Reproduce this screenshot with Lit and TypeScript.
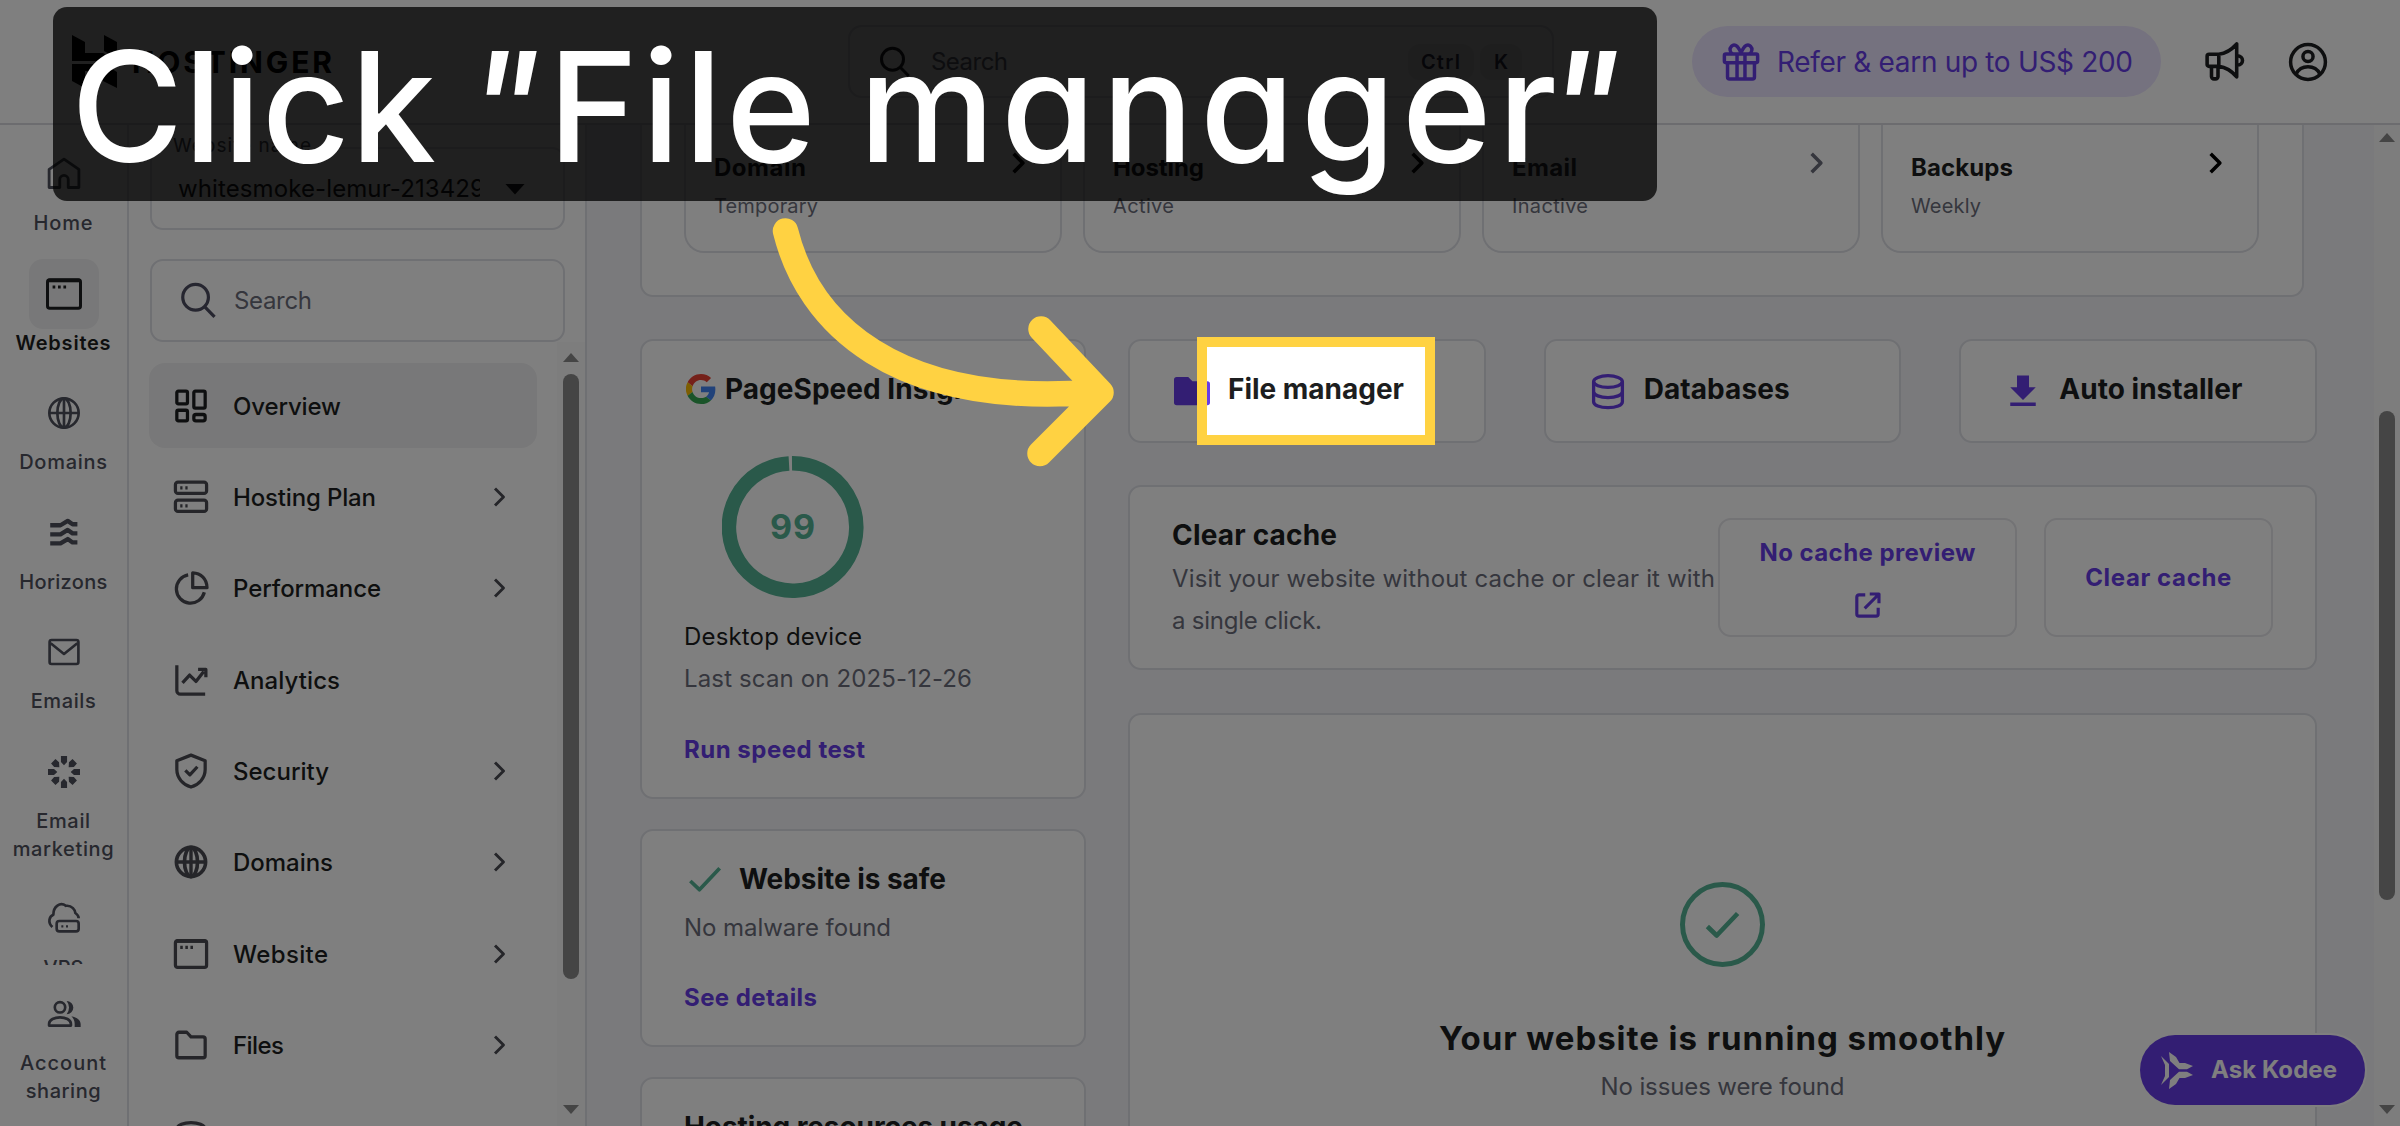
import { LitElement, html, css, svg } from 'lit';
import { customElement } from 'lit/decorators.js';
import { classMap } from 'lit/directives/class-map.js';

// one line of text, tracked in or out so it fills exactly w pixels
@customElement('fit-text')
export class FitText extends LitElement {
    static properties = { w: { type: Number } };
    declare w: number;

    static styles = css`
        :host { display: inline-block; white-space: pre; }
    `;

    firstUpdated() {
        const len = (this.textContent || '').length;
        const natural = this.getBoundingClientRect().width;
        if (this.w && len > 1) this.style.letterSpacing = `${(this.w - natural) / (len - 1)}px`;
    }

    render() {
        return html`<slot></slot>`;
    }
}

// all icons are on a 24 grid, stroked unless they carry the "solid" class
const icons: Record<string, unknown> = {
    home: svg`<path d="M1.500 21.500V8.700L12 1.500L22.500 8.700V21.500H15V16a3 3 0 0 0-6 0V21.500Z"/>`,
    window: svg`<rect x="1" y="2.500" width="22" height="19" rx="1.500"/><path d="M1.500 3H22.500" stroke-width="2.400"/><path d="M4.400 7.300h1.800M8 7.300h1.800M11.600 7.300h1.800"/>`,
    globe: svg`<circle cx="12" cy="12" r="11"/><ellipse cx="12" cy="12" rx="5" ry="11"/><path d="M1 12H23M12 1V23"/>`,
    globeBold: svg`<circle cx="12" cy="12" r="10.300" stroke-width="2.600"/><ellipse cx="12" cy="12" rx="4.600" ry="10.300" stroke-width="2.600"/><path d="M2 12H22M12 2V22" stroke-width="2.400"/>`,
    horizons: svg`<path stroke-width="3.600" d="M1 6h8.500L15.500 2.400l4 2.800h4M1 13.500h8.500L15.500 9.900l4 2.800h4M1 21h8.500l6-3.600 4 2.800h4"/>`,
    mail: svg`<rect x="1.200" y="3" width="21.600" height="18" rx="1.500"/><path d="M2 5.500L12 13.500L22 5.500"/>`,
    burst: svg`<path class="solid" d="M9.700 0H14.300V4.500L12 7L9.700 4.500ZM9.700 24H14.300V19.500L12 17L9.700 19.500ZM0 9.700V14.300H4.500L7 12L4.500 9.700ZM24 9.700V14.300H19.500L17 12L19.500 9.700ZM2.300 5.600L5.600 2.300L8.300 4.600L8.500 8.500L4.600 8.300ZM21.700 5.600L18.400 2.300L15.700 4.600L15.500 8.500L19.400 8.300ZM2.300 18.400L5.600 21.700L8.300 19.400L8.500 15.500L4.600 15.700ZM21.700 18.400L18.400 21.700L15.700 19.400L15.500 15.500L19.400 15.700Z"/>`,
    vps: svg`<path d="M3.300 18C-.5 14.500 1 10 4 8.800C4 2.500 9 -1 13.500 2.100C18 1.500 20.500 5.500 20.500 7.500C22 8.500 23 10.500 23 11.500"/><rect x="6.500" y="13.500" width="16.500" height="7.800" rx="2"/><path d="M10 17.500h1.500M13.500 17.500H15" stroke-width="1.600"/>`,
    people: svg`<circle cx="9" cy="7" r="3.900"/><path d="M.8 20.700v-1.200C.8 16.200 5 14.500 9 14.500s8.200 1.700 8.200 5v1.200Z"/><path class="solid" d="M14 2.200a5 5 0 0 1 0 10a8 8 0 0 0 0-10ZM17.500 13.700c4.500 .8 7 3 7 6v2h-4.500v-2.500c0-2.200-1-4-2.500-5.500Z"/>`,
    search: svg`<circle cx="10" cy="9.800" r="8.800"/><path d="M16 16L23 23.200"/>`,
    grid: svg`<rect x="2" y="1.500" width="7.500" height="9" rx="1"/><rect x="14" y="1.500" width="8" height="12" rx="1"/><rect x="2" y="15" width="7.500" height="7.500" rx="1"/><rect x="14" y="18" width="8" height="4.500" rx="1.500"/>`,
    server: svg`<rect x="1" y="1.500" width="22" height="8" rx="1.800"/><rect x="1" y="14.200" width="22" height="8" rx="1.800"/><path d="M4.400 5.500H6M8 5.500h1.600M4.400 18.200H6M8 18.200h1.600"/>`,
    pie: svg`<path d="M10 2.800A10 10 0 1 0 21.400 15M13.200 1.300V11.800H23.300C23.300 5.500 19 1.500 13.200 1.300Z"/>`,
    chart: svg`<path d="M2 1.500V19.500a2.500 2.500 0 0 0 2.500 2.500H22M6 14l5-5.500 4.500 4.500L21 6M17 4.500h5.500V10"/>`,
    shield: svg`<path d="M12 .8L22 4.800V11c0 6-4.500 10.800-10 12.300C6.500 21.800 2 17 2 11V4.800Z"/><path d="M8 11.500l3.200 3.200L16.500 9"/>`,
    folder: svg`<path d="M2 4.500A1.500 1.500 0 0 1 3.500 3H9l3 3.200h8.500A1.500 1.500 0 0 1 22 7.700V19.500a1.500 1.500 0 0 1-1.500 1.500H3.500A1.500 1.500 0 0 1 2 19.500Z"/>`,
    folderFill: svg`<path class="solid" d="M0 4.500a1.800 1.800 0 0 1 1.800-1.800H9.500l2.800 2.800H22.200A1.800 1.800 0 0 1 24 7.300v12.400a1.800 1.800 0 0 1-1.800 1.800H1.800A1.800 1.800 0 0 1 0 19.700Z"/>`,
    database: svg`<ellipse cx="12" cy="5.700" rx="9.600" ry="3.900"/><path d="M2.400 5.700V19.100c0 2.300 4.200 4 9.600 4s9.600-1.700 9.600-4V5.700M2.400 12.400c0 2.300 4.200 4 9.600 4s9.600-1.700 9.600-4"/>`,
    download: svg`<path class="solid" d="M8 1.700h8V9.500h4.500L12 18 3.500 9.500H8ZM3.500 19.600H20.500V22H3.500Z"/>`,
    gift: svg`<rect x="1.500" y="7" width="21" height="5.400" rx="1"/><path d="M3.500 12.400V21.500a1.300 1.300 0 0 0 1.300 1.300H19.200a1.300 1.300 0 0 0 1.300-1.300V12.400M9.500 7V22.500M14.500 7V22.500M12 6.500C10 1 7.500 .5 6 2C4.500 3.500 5 5.500 6.500 7M12 6.500C14 1 16.500 .5 18 2C19.500 3.500 19 5.500 17.500 7"/>`,
    megaphone: svg`<path d="M8.500 7.500H2.500a1.200 1.200 0 0 0-1.200 1.200v5.100A1.200 1.200 0 0 0 2.500 15H8.500ZM8.500 7.500C13 7 17 4 19.500 1.200V21.500C17 18.500 13 15.500 8.500 15M4 15.200v6a1.500 1.500 0 0 0 1.500 1.500h1A1.500 1.500 0 0 0 8 21.200V15.200M19.700 8.500c4.500 0 4.500 5.700 0 5.700"/>`,
    user: svg`<circle cx="12" cy="12" r="11"/><circle cx="12" cy="8.500" r="3.200"/><path d="M4.500 19.500C6 16.500 9 15 12 15s6 1.500 7.500 4.500"/>`,
    chevron: svg`<path d="M8 3.500L16.500 12L8 20.500"/>`,
    check: svg`<path d="M1 13.500L7.800 20L23 4"/>`,
    external: svg`<path d="M10 2.500H4.500a2 2 0 0 0-2 2V19.500a2 2 0 0 0 2 2H19.500a2 2 0 0 0 2-2V14M14 1.800h8.200V10M22 2L9.500 14.500"/>`,
};

const icon = (name: string, size: number, stroke = 2) => html`
    <svg class="icon" viewBox="0 0 24 24" width=${size} height=${size} stroke-width=${stroke}>${icons[name]}</svg>`;

const t = (text: string, w: number) => html`<fit-text w=${w}>${text}</fit-text>`;

@customElement('app-root')
export class AppRoot extends LitElement {

    rail = [
        { icon: 'home', size: 34, lines: [['Home', 59]] },
        { icon: 'window', size: 36, lines: [['Websites', 95]], active: true },
        { icon: 'globe', size: 32, lines: [['Domains', 88]] },
        { icon: 'horizons', size: 29, lines: [['Horizons', 88]] },
        { icon: 'mail', size: 32, lines: [['Emails', 65]] },
        { icon: 'burst', size: 32, lines: [['Email', 54], ['marketing', 101]] },
        { icon: 'vps', size: 32, lines: [['VPS', 40]] },
    ];

    menu = [
        { icon: 'grid', name: 'Overview', w: 108, active: true },
        { icon: 'server', name: 'Hosting Plan', w: 143, more: true },
        { icon: 'pie', name: 'Performance', w: 148, more: true },
        { icon: 'chart', name: 'Analytics', w: 107 },
        { icon: 'shield', name: 'Security', w: 96, more: true },
        { icon: 'globeBold', name: 'Domains', w: 100, more: true },
        { icon: 'window', name: 'Website', w: 95, more: true },
        { icon: 'folder', name: 'Files', w: 51, more: true },
        { icon: 'database', name: 'Databases', w: 120, more: true },
    ];

    status = [
        { name: 'Domain', w: 92, value: 'Temporary', vw: 104 },
        { name: 'Hosting', w: 91, value: 'Active', vw: 61 },
        { name: 'Email', w: 65, value: 'Inactive', vw: 76, off: true },
        { name: 'Backups', w: 102, value: 'Weekly', vw: 70 },
    ];

    tools = [
        { icon: 'folderFill', size: 36, name: 'File manager', w: 176 },
        { icon: 'database', size: 36, name: 'Databases', w: 146 },
        { icon: 'download', size: 36, name: 'Auto installer', w: 183 },
    ];

    static styles = css`
        :host {
            display: block;
            position: relative;
            width: 2400px;
            height: 1126px;
            overflow: hidden;
            background: #ffffff;
            color: #1d1e20;
            font-family: 'Inter', 'Liberation Sans', sans-serif;
            font-size: 24px;
            line-height: 42px;
            --gray: #6b6d7a;
            --line: #dfe0e6;
            --purple: #673de6;
            --green: #54b394;
            --yellow: #ffd242;
        }
        * { box-sizing: border-box; }
        .icon { display: block; flex: none; fill: none; stroke: currentColor; stroke-linejoin: round; overflow: visible; }
        .solid { fill: currentColor; stroke: none; }

        /* header */
        .header { display: flex; align-items: center; height: 125px; padding-right: 72px; border-bottom: 2px solid #d8d9df; }
        .logo { display: flex; align-items: center; gap: 15px; width: 848px; padding-left: 72px; font-size: 30px; font-weight: 700; color: #000; }
        .logo svg { display: block; fill: #000; }
        .top-search { display: flex; align-items: center; width: 706px; height: 73px; padding: 0 30px; border: 2px solid var(--line); border-radius: 14px; color: var(--gray); }
        .top-search .icon { color: #1d1e20; margin-right: 21px; }
        .keys { display: flex; gap: 6px; margin-left: auto; }
        .key { display: flex; align-items: center; justify-content: center; height: 36px; width: 66px; border-radius: 12px; background: #f2f2f3; color: #36344d; font-size: 20px; font-weight: 600; }
        .key.small { width: 42px; }
        .refer { display: flex; align-items: center; gap: 17px; width: 469px; height: 71px; margin-left: 138px; padding-left: 30px; border-radius: 36px; background: #ebe4ff; color: var(--purple); font-size: 28px; }
        .megaphone { margin-left: 44px; }
        .account { margin-left: 45px; }

        .body { display: flex; height: 1001px; }

        /* left rail */
        .rail { width: 129px; border-right: 2px solid var(--line); font-size: 20px; font-weight: 500; line-height: 28px; color: #4e505c; }
        .rail-list { height: 840px; padding-top: 14px; overflow: hidden; }
        .rail-item { display: flex; flex-direction: column; align-items: center; margin-bottom: 21.500px; }
        .rail-icon { display: flex; align-items: center; justify-content: center; width: 70px; height: 70px; border-radius: 14px; }
        .rail-item.active { color: #1d1e20; font-weight: 600; }
        .rail-item.active .rail-icon { background: #f1f1f2; }
        .rail-bottom { padding-top: 13.500px; }

        /* sidebar */
        .side { width: 458px; border-right: 2px solid var(--line); }
        .select { position: relative; display: flex; align-items: center; width: 415px; height: 83px; margin: 22px 0 0 21px; padding: 1px 38px 0 26px; border: 2px solid var(--line); border-radius: 13px; }
        .select-label { position: absolute; top: -20px; left: 13px; padding: 0 8px; background: #fff; font-size: 19px; line-height: 34px; color: #4e505c; }
        .select-value { width: 302px; overflow: hidden; }
        .caret { width: 20px; height: 11px; margin-left: auto; background: #1d1e20; clip-path: polygon(0 0, 100% 0, 50% 100%); }
        .side-search { display: flex; align-items: center; gap: 18px; width: 415px; height: 83px; margin: 29px 0 0 21px; padding-left: 29px; border: 2px solid var(--line); border-radius: 13px; color: var(--gray); }
        .side-search .icon { color: #4d4c60; }
        .side-scroll { display: flex; height: 784px; overflow: hidden; }
        .menu { width: 388px; margin: 21px 0 0 20px; }
        .menu-item { display: flex; align-items: center; height: 85px; margin-bottom: 6.400px; padding: 0 26px 0 25px; border-radius: 16px; font-weight: 500; }
        .menu-item > .icon { color: #4a4b52; }
        .menu-item fit-text { margin-left: 25px; padding-top: 2px; }
        .menu-item.active { background: #f1f1f2; }
        .menu-item.active > .icon { color: #1d1e20; }
        .chevron { margin-left: auto; color: #4a4b52; }

        /* scroll bars */
        .bar { display: flex; flex-direction: column; align-items: center; background: #fbfbfb; }
        .bar-side { width: 28px; margin-left: 20.500px; padding: 11px 0 12px; }
        .bar-page { width: 26px; padding: 8px 0 12px; }
        .up, .down { flex: none; width: 16px; height: 9px; background: #8a8a8a; clip-path: polygon(50% 0, 100% 100%, 0 100%); }
        .down { clip-path: polygon(0 0, 100% 0, 50% 100%); margin-top: auto; }
        .thumb { flex: none; width: 16px; border-radius: 8px; background: #8a8a8a; }
        .bar-side .thumb { height: 605px; margin-top: 12px; }
        .bar-page .thumb { height: 489px; margin-top: 269px; }

        /* main */
        .main { flex: 1; padding-left: 53px; overflow: hidden; background: #f4f5f9; }
        .card { background: #fff; border: 2px solid var(--line); border-radius: 13px; }
        .overview { display: grid; grid-template-columns: repeat(4, 378px); gap: 21px; width: 1664px; height: 172px; padding: 0 42px 42px; border-top: 0; border-radius: 0 0 13px 13px; }
        .status { display: flex; justify-content: space-between; padding: 24.500px 29px 0 28px; border: 2px solid var(--line); border-top: 0; border-radius: 0 0 20px 20px; }
        .status-name { display: block; line-height: 36px; font-weight: 700; }
        .status-value { display: block; margin-top: 6px; font-size: 20px; line-height: 28px; color: var(--gray); }
        .status .icon { color: #000; }
        .status.off .status-name { color: #36373f; }
        .status.off .icon { color: var(--gray); }

        .columns { display: flex; gap: 42px; margin-top: 42px; }
        .left { display: flex; flex-direction: column; gap: 30px; width: 446px; }
        .left .card { padding: 29px 42px 0; }
        .title { display: flex; align-items: center; font-size: 28px; line-height: 38px; font-weight: 700; }
        .speed { height: 460px; }
        .speed .title { gap: 9px; padding-left: 2px; }
        .ring { display: flex; align-items: center; justify-content: center; position: relative; width: 142px; height: 142px; margin: 48px 0 18px 38px; color: #54b394; font-size: 34px; font-weight: 700; }
        .ring svg { position: absolute; inset: 0; }
        .muted { color: var(--gray); }
        .line { height: 42px; }
        .link { height: 42px; margin-top: 28.500px; color: var(--purple); font-weight: 700; }
        .safe { height: 218px; }
        .safe .title { gap: 18px; padding-left: 5px; margin-bottom: 8.500px; }
        .safe .icon { color: var(--green); }
        .usage { height: 140px; }

        .right { width: 1189px; }
        .tools { display: grid; grid-template-columns: repeat(3, 1fr); gap: 58px; }
        .tool { display: flex; align-items: center; gap: 18px; height: 104px; padding-left: 44px; }
        .tool .icon { color: var(--purple); }
        .tool .title { padding-bottom: 5px; }
        .cache { display: flex; align-items: center; height: 185px; margin-top: 42px; padding: 0 42px; }
        .cache-text { width: 546.500px; height: 124px; }
        .cache-text .title { margin-bottom: 4px; }
        .button { display: flex; flex-direction: column; align-items: center; height: 119px; border: 2px solid #e6e6ea; border-radius: 13px; color: var(--purple); font-weight: 700; }
        .preview { width: 299px; margin-right: 27px; padding-top: 12px; }
        .preview .icon { margin-top: 18px; }
        .clear { width: 229px; padding-top: 37px; }
        .health { display: flex; flex-direction: column; align-items: center; height: 500px; margin-top: 42.500px; padding-top: 167.500px; }
        .health-icon { display: flex; align-items: center; justify-content: center; width: 85px; height: 85px; border: 5px solid var(--green); border-radius: 50%; color: var(--green); }
        .health-title { height: 48px; margin: 46.500px 0 4px; font-size: 33px; line-height: 48px; font-weight: 700; }

        /* floating parts */
        .kodee { position: absolute; left: 2140px; top: 1035px; display: flex; align-items: center; gap: 18px; width: 225px; height: 70px; padding-left: 21px; border-radius: 35px; background: var(--purple); box-shadow: 0 0 0 2px #fff; color: #fff; font-weight: 700; }
        .kodee svg { display: block; fill: #fff; }
        .spotlight { position: absolute; left: 1197px; top: 337px; width: 238px; height: 108px; border: 10.500px solid var(--yellow); box-shadow: 0 0 0 2400px rgba(0, 0, 0, 0.5); }
        .arrow { position: absolute; left: 0; top: 0; fill: none; stroke: var(--yellow); stroke-width: 25.500; stroke-linecap: round; stroke-linejoin: round; }
        .caption { position: absolute; left: 53px; top: 7px; display: flex; width: 1604px; height: 194px; padding: 3px 0 0 18px; border-radius: 14px; background: rgba(0, 0, 0, 0.75); color: #fff; font-size: 153px; line-height: 194px; font-weight: 540; font-feature-settings: 'cv11'; }
        .word { width: 394px; }
        .quote { width: 83px; font-style: italic; }
        .word.file { width: 311px; }
        .word.last { width: 686px; }
    `;

    renderHeader() {
        return html`
            <div class="header">
                <div class="logo">
                    <svg width="45" height="53" viewBox="0 0 45 53">
                        <path d="M0 0L13 7V18H31L45 26H0ZM32 0L45 7V23L32 16ZM0 29H32L45 37V53L31 46V36H13V45L0 37ZM0 37L13 45V53L0 46Z"/>
                    </svg>
                    ${t('HOSTINGER', 200)}
                </div>
                <div class="top-search">
                    ${icon('search', 30, 2.4)}
                    ${t('Search', 77)}
                    <div class="keys">
                        <div class="key">${t('Ctrl', 39)}</div>
                        <div class="key small">K</div>
                    </div>
                </div>
                <div class="refer">
                    ${icon('gift', 38, 2.2)}
                    ${t('Refer & earn up to US$ 200', 356)}
                </div>
                <div class="megaphone">${icon('megaphone', 39, 2.2)}</div>
                <div class="account">${icon('user', 38, 2.2)}</div>
            </div>`;
    }

    renderRailItem(item: any) {
        return html`
            <div class=${classMap({ 'rail-item': true, active: !!item.active })}>
                <div class="rail-icon">${icon(item.icon, item.size, 2)}</div>
                ${item.lines.map(([text, w]: [string, number]) => t(text, w))}
            </div>`;
    }

    renderSide() {
        return html`
            <div class="side">
                <div class="select">
                    <div class="select-label">${t('Website name', 138)}</div>
                    <div class="select-value">${t('whitesmoke-lemur-213429', 307)}</div>
                    <div class="caret"></div>
                </div>
                <div class="side-search">
                    ${icon('search', 35, 2.2)}
                    ${t('Search', 78)}
                </div>
                <div class="side-scroll">
                    <div class="menu">
                        ${this.menu.map(item => html`
                            <div class=${classMap({ 'menu-item': true, active: !!item.active })}>
                                ${icon(item.icon, 34, 2.3)}
                                ${t(item.name, item.w)}
                                ${item.more ? html`<div class="chevron">${icon('chevron', 24, 2.9)}</div>` : ''}
                            </div>
                        `)}
                    </div>
                    <div class="bar bar-side">
                        <div class="up"></div>
                        <div class="thumb"></div>
                        <div class="down"></div>
                    </div>
                </div>
            </div>`;
    }

    renderLeft() {
        return html`
            <div class="left">
                <div class="card speed">
                    <div class="title">
                        <svg width="30" height="30" viewBox="0 0 48 48">
                            <path fill="#EA4335" d="M24 9.500c3.500 0 6.700 1.200 9.200 3.600l6.900-6.900C35.900 2.400 30.500 0 24 0 14.600 0 6.500 5.400 2.600 13.200l8 6.200C12.400 13.700 17.700 9.500 24 9.500z"/>
                            <path fill="#4285F4" d="M47 24.600c0-1.600-.2-3.100-.4-4.600H24v9h12.900c-.6 3-2.300 5.500-4.800 7.200l7.700 6c4.500-4.200 7.200-10.400 7.200-17.600z"/>
                            <path fill="#FBBC05" d="M10.500 28.600A14.500 14.500 0 0 1 10.500 19.400l-8-6.200a24 24 0 0 0 0 21.600z"/>
                            <path fill="#34A853" d="M24 48c6.500 0 11.900-2.100 15.900-5.800l-7.700-6c-2.200 1.500-4.900 2.300-8.200 2.300-6.300 0-11.600-4.200-13.500-9.900l-8 6.200C6.500 42.600 14.600 48 24 48z"/>
                        </svg>
                        ${t('PageSpeed Insights', 272)}
                    </div>
                    <div class="ring">
                        <svg width="142" height="142" viewBox="0 0 142 142" fill="none" stroke="currentColor" stroke-width="14.500">
                            <path d="M70 7.300A63.700 63.700 0 1 1 67 7.400"/>
                        </svg>
                        ${t('99', 45)}
                    </div>
                    <div class="line">${t('Desktop device', 178)}</div>
                    <div class="line muted">${t('Last scan on 2025-12-26', 288)}</div>
                    <div class="link">${t('Run speed test', 181)}</div>
                </div>
                <div class="card safe">
                    <div class="title">${icon('check', 32, 2.8)}${t('Website is safe', 207)}</div>
                    <div class="line muted">${t('No malware found', 207)}</div>
                    <div class="link">${t('See details', 133)}</div>
                </div>
                <div class="card usage">
                    <div class="title">${t('Hosting resources usage', 339)}</div>
                </div>
            </div>`;
    }

    renderRight() {
        return html`
            <div class="right">
                <div class="tools">
                    ${this.tools.map(tool => html`
                        <div class="card tool">
                            ${icon(tool.icon, tool.size, 2.2)}
                            <div class="title">${t(tool.name, tool.w)}</div>
                        </div>
                    `)}
                </div>
                <div class="card cache">
                    <div class="cache-text">
                        <div class="title">${t('Clear cache', 165)}</div>
                        <div class="line muted">${t('Visit your website without cache or clear it with', 543)}</div>
                        <div class="line muted">${t('a single click.', 150)}</div>
                    </div>
                    <div class="button preview">${t('No cache preview', 216)}${icon('external', 27, 2.8)}</div>
                    <div class="button clear">${t('Clear cache', 146)}</div>
                </div>
                <div class="card health">
                    <div class="health-icon">${icon('check', 33, 3.4)}</div>
                    <div class="health-title">${t('Your website is running smoothly', 566)}</div>
                    <div class="muted">${t('No issues were found', 244)}</div>
                </div>
            </div>`;
    }

    render() {
        return html`
            ${this.renderHeader()}
            <div class="body">
                <div class="rail">
                    <div class="rail-list">${this.rail.map(item => this.renderRailItem(item))}</div>
                    <div class="rail-bottom">
                        ${this.renderRailItem({ icon: 'people', size: 32, lines: [['Account', 86], ['sharing', 75]] })}
                    </div>
                </div>
                ${this.renderSide()}
                <div class="main">
                    <div class="card overview">
                        ${this.status.map(s => html`
                            <div class=${classMap({ status: true, off: !!s.off })}>
                                <div>
                                    <div class="status-name">${t(s.name, s.w)}</div>
                                    <div class="status-value">${t(s.value, s.vw)}</div>
                                </div>
                                ${icon('chevron', 26, 3.3)}
                            </div>
                        `)}
                    </div>
                    <div class="columns">
                        ${this.renderLeft()}
                        ${this.renderRight()}
                    </div>
                </div>
                <div class="bar bar-page">
                    <div class="up"></div>
                    <div class="thumb"></div>
                    <div class="down"></div>
                </div>
            </div>
            <div class="kodee">
                <svg width="32" height="37" viewBox="0 0 32 37">
                    <path d="M0 4L8 12V25L0 33L4 24V13ZM8 0L15 5L18.500 11H24L32 14L26 17.200H18L9 9ZM8 37L15 32L18.500 26H24L32 23L26 19.800H18L9 28Z"/>
                </svg>
                ${t('Ask Kodee', 126)}
            </div>
            <div class="spotlight"></div>
            <div class="caption">
                <div class="word">${t('Click', 365)}</div>
                <div class="quote">"</div>
                <div class="word file">${t('File', 268)}</div>
                <div class="word last">${t('manager', 698)}</div>
                <div class="quote">"</div>
            </div>
            <svg class="arrow" width="2400" height="1126" viewBox="0 0 2400 1126">
                <path d="M785.500 231C808 322 893 408 1095 392M1041 329L1101 392.500L1040 453.500"/>
            </svg>`;
    }
}
